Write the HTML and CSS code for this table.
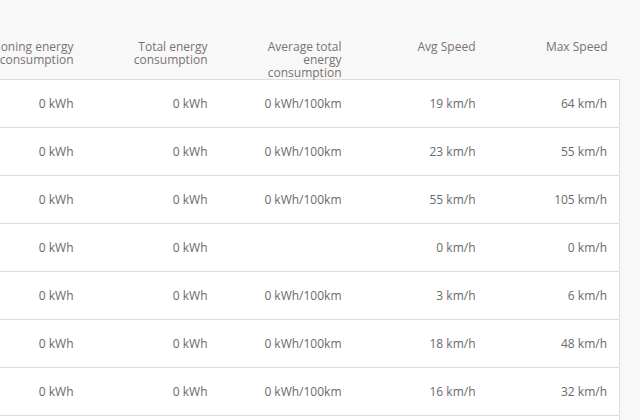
FILE: index.html
```html
<!DOCTYPE html>
<html>
<head>
<meta charset="utf-8">
<link rel="stylesheet" href="styles.css">
</head>
<body>
<div class="wrap">
  <table class="grid">
    <colgroup>
      <col class="c0"><col class="c"><col class="c"><col class="c"><col class="c4">
    </colgroup>
    <thead>
      <tr>
        <th>Air conditioning energy<br>consumption</th>
        <th>Total energy<br>consumption</th>
        <th>Average total<br>energy<br>consumption</th>
        <th>Avg Speed</th>
        <th>Max Speed</th>
      </tr>
    </thead>
    <tbody>
      <tr><td>0 kWh</td><td>0 kWh</td><td>0 kWh/100km</td><td>19 km/h</td><td>64 km/h</td></tr>
      <tr><td>0 kWh</td><td>0 kWh</td><td>0 kWh/100km</td><td>23 km/h</td><td>55 km/h</td></tr>
      <tr><td>0 kWh</td><td>0 kWh</td><td>0 kWh/100km</td><td>55 km/h</td><td>105 km/h</td></tr>
      <tr><td>0 kWh</td><td>0 kWh</td><td></td><td>0 km/h</td><td>0 km/h</td></tr>
      <tr><td>0 kWh</td><td>0 kWh</td><td>0 kWh/100km</td><td>3 km/h</td><td>6 km/h</td></tr>
      <tr><td>0 kWh</td><td>0 kWh</td><td>0 kWh/100km</td><td>18 km/h</td><td>48 km/h</td></tr>
      <tr><td>0 kWh</td><td>0 kWh</td><td>0 kWh/100km</td><td>16 km/h</td><td>32 km/h</td></tr>
      <tr><td></td><td></td><td></td><td></td><td></td></tr>
    </tbody>
  </table>
</div>
</body>
</html>
```
FILE: styles.css
```css
html, body {
  margin: 0;
  padding: 0;
  background: #f8f8f8;
  height: 420px;
  overflow: hidden;
}
body {
  font-family: "Open Sans", "Noto Sans", Arial, sans-serif;
  font-size: 12px;
  color: #6a6a6a;
}
.wrap {
  display: flex;
  justify-content: flex-end;
  padding: 40px 20px 0 0;
  overflow: hidden;
}
.grid {
  flex-shrink: 0;
  border-collapse: collapse;
  table-layout: fixed;
  width: 714px;
}
.c0 { width: 180px; }
.c { width: 134px; }
.c4 { width: 132px; }
.grid th {
  font-weight: normal;
  color: #7a7370;
  text-align: right;
  vertical-align: top;
  line-height: 13px;
  padding: 0 12px 0 0;
  white-space: nowrap;
}
.grid tbody {
  background: #fff;
  border: 1px solid #dddddd;
}
.grid td {
  text-align: right;
  padding: 0 12px 0 0;
  height: 47px;
  border-bottom: 1px solid #dddddd;
  white-space: nowrap;
}
```
